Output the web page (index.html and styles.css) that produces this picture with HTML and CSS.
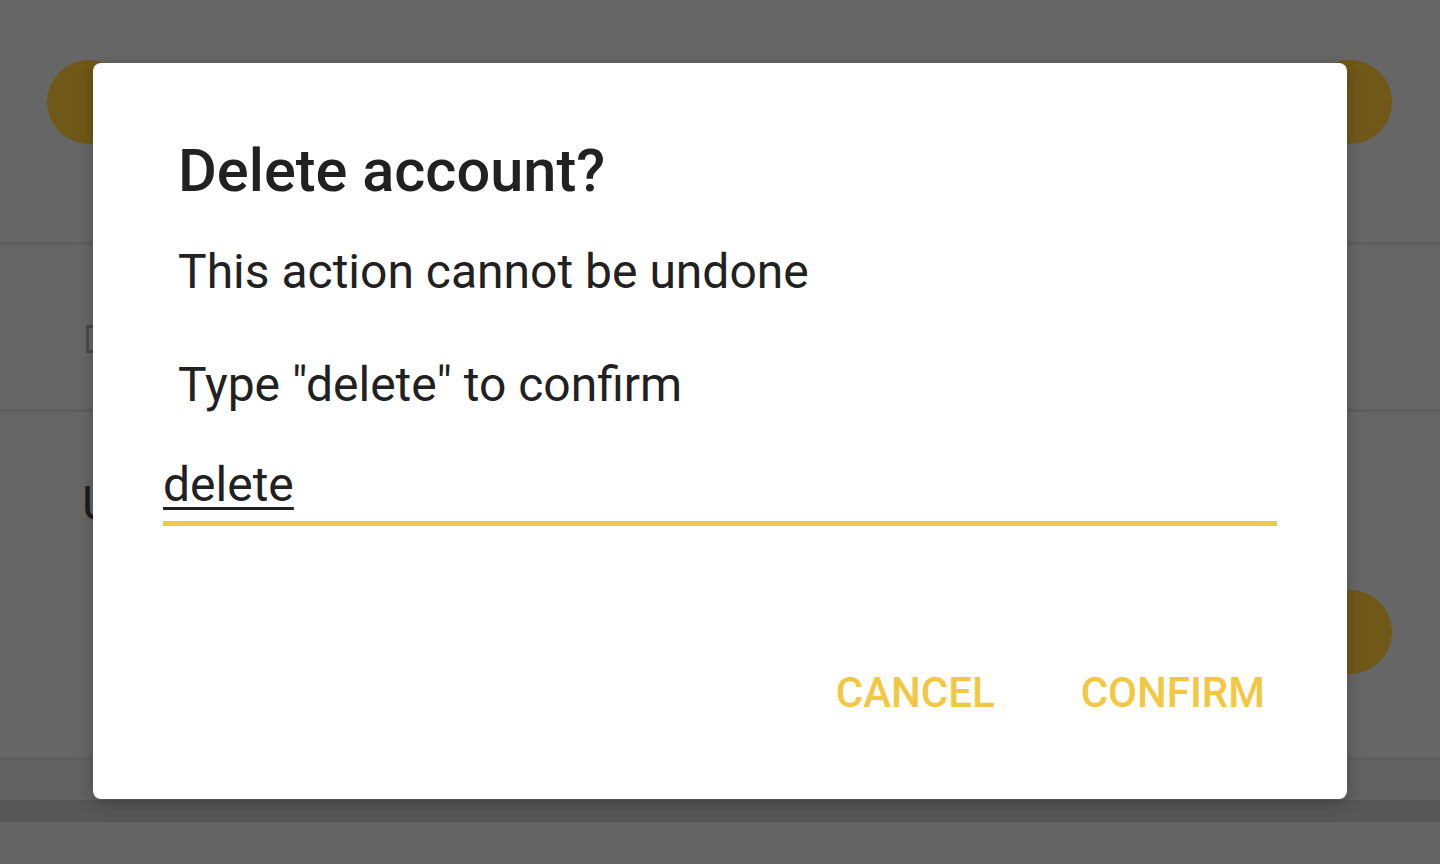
FILE: index.html
```html
<!DOCTYPE html>
<html>
<head>
<meta charset="utf-8">
<link rel="stylesheet" href="styles.css">
</head>
<body>
<div class="app">
  <div class="header">
    <span class="fab"></span>
    <span class="fab"></span>
  </div>
  <div class="row row-check">
    <span class="check"></span>
  </div>
  <div class="row row-user">
    <span class="user-letter">U</span>
    <div class="user-side">
      <span class="fab"></span>
    </div>
  </div>
  <div class="row row-thin"></div>
  <div class="row row-dark"></div>
  <div class="row row-rest"></div>
</div>

<div class="dialog">
  <h1 class="title">Delete account?</h1>
  <p class="message">This action cannot be undone</p>
  <p class="prompt">Type "delete" to confirm</p>
  <div class="field"><span class="field-text">delete</span></div>
  <div class="actions">
    <span class="btn">CANCEL</span>
    <span class="btn">CONFIRM</span>
  </div>
</div>
</body>
</html>
```

FILE: styles.css
```css
html, body {
  margin: 0;
  padding: 0;
}
body {
  width: 1440px;
  height: 864px;
  overflow: hidden;
  background: #666666;
  font-family: Roboto, "Noto Sans", "Liberation Sans", sans-serif;
  position: relative;
}

.app {
  display: flex;
  flex-direction: column;
  height: 864px;
}
.header {
  display: flex;
  justify-content: space-between;
  padding: 0 48px 0 47px;
  border-bottom: 3px solid #5e5e5e;
  box-sizing: border-box;
  height: 245px;
}
.fab {
  width: 84px;
  height: 84px;
  border-radius: 50%;
  background: #6f5818;
  margin-top: 60px;
}
.row {
  box-sizing: border-box;
  border-bottom: 3px solid #5e5e5e;
}
.row-check {
  height: 167px;
  padding: 80px 0 0 86px;
}
.check {
  display: block;
  width: 20px;
  height: 28px;
  border: 3px solid #4a4a4a;
  box-sizing: border-box;
}
.row-user {
  height: 348px;
  display: flex;
  justify-content: space-between;
  padding: 0 48px 0 82px;
}
.user-letter {
  font-size: 48px;
  color: #1c1c1c;
  margin-top: 62px;
  line-height: 60px;
}
.user-side {
  display: flex;
}
.row-user .fab {
  margin-top: 178px;
}
.row-thin {
  height: 40px;
  border: 0;
  background: #626262;
}
.row-dark {
  height: 22px;
  background: #575757;
  border-bottom: 2px solid #535353;
}
.row-rest {
  flex: 1;
  border: 0;
  background: #636363;
}

.dialog {
  position: absolute;
  left: 93px;
  top: 63px;
  width: 1254px;
  height: 736px;
  box-sizing: border-box;
  background: #ffffff;
  border-radius: 8px;
  box-shadow: 0 4px 16px rgba(0,0,0,0.25);
  padding: 72px 70px 0 70px;
  display: flex;
  flex-direction: column;
  color: #212121;
}
.title {
  margin: 0 0 0 15px;
  font-size: 59.5px;
  line-height: 72px;
  font-weight: 500;
  color: #212121;
}
.message {
  margin: 35px 0 0 15px;
  font-size: 48px;
  line-height: 60px;
  font-weight: 400;
}
.prompt {
  margin: 53px 0 0 15px;
  font-size: 48px;
  line-height: 60px;
  font-weight: 400;
}
.field {
  margin-top: 40px;
  padding-bottom: 6px;
  border-bottom: 5px solid #f4c74a;
  font-size: 48px;
  line-height: 60px;
}
.field-text {
  text-decoration: underline;
  text-decoration-thickness: 3px;
  text-underline-offset: 6px;
  color: #212121;
}
.actions {
  margin-top: 141px;
  display: flex;
  justify-content: flex-end;
  gap: 86px;
  padding-right: 12px;
}
.btn {
  font-size: 42px;
  line-height: 52px;
  font-weight: 500;
  color: #f2c843;
}
```
